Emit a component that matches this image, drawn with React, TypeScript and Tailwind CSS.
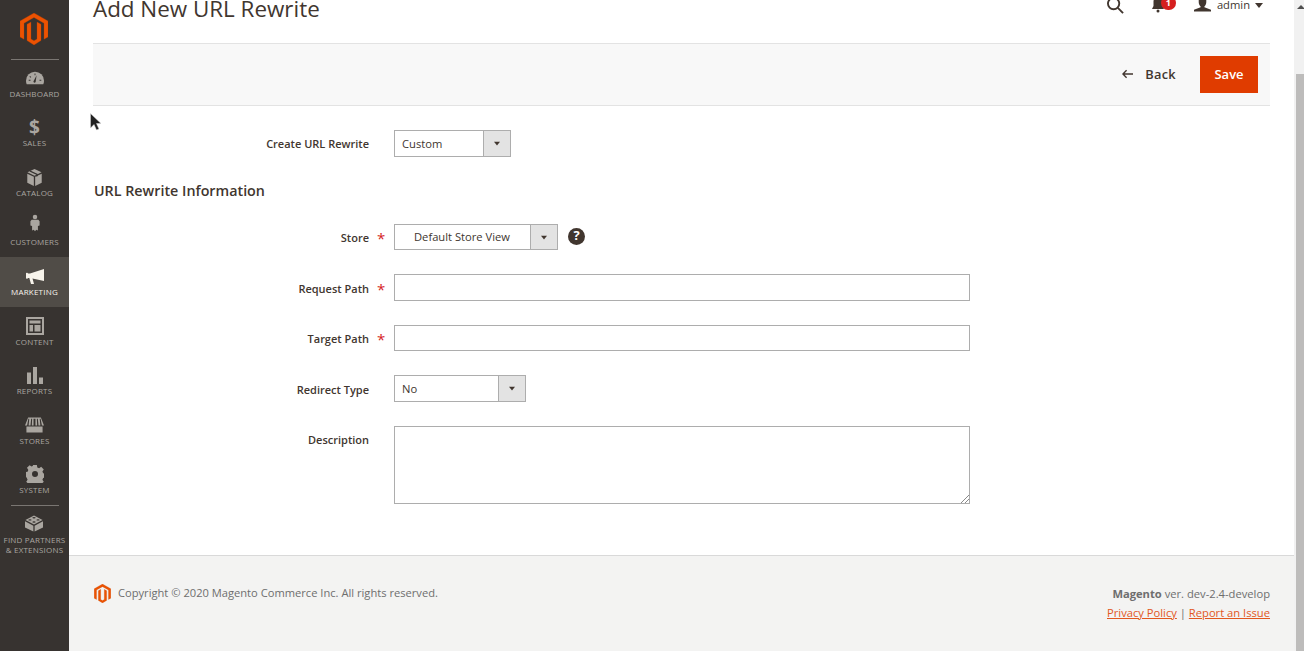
import React from "react";

const font = { fontFamily: '"Open Sans", sans-serif' };

function Logo({ className }: { className: string }) {
  return (
    <svg viewBox="0 0 28 32" className={className} fill="#eb5202" stroke="#b84002" strokeWidth="0.3">
      <path d="M14 0 L28 8 V24 L24 26.3 V10.2 L14 4.5 L4 10.2 V26.3 L0 24 V8 Z" />
      <path d="M7 11.200 L11 9 V26 L14 27.700 L17 26 V9 L21 11.200 V27.600 L14 32 L7 27.600 Z" />
    </svg>
  );
}

const iconFill = "#aaa6a0";

const icons: Record<string, React.ReactNode> = {
  dashboard: (
    <svg viewBox="0 0 20 14" className="h-[14px] w-[18px]">
      <path fill={iconFill} d="M10 0a10 10 0 0 1 10 10c0 1.5-.3 2.8-.8 4H.8C.3 12.800 0 11.500 0 10A10 10 0 0 1 10 0Z" />
      <path fill="#373330" d="M11.800 4 L10.800 10.500 A1.300 1.300 0 1 1 8.800 9.800 Z M3 9h2v1H3Zm12 0h2v1h-2ZM4.500 4.800l1.300 1.200-.7.700-1.300-1.200ZM9.500 2h1v2h-1Z" />
    </svg>
  ),
  sales: <div className="h-[18px] text-[19px] leading-[18px] font-bold text-[#aaa6a0]">$</div>,
  catalog: (
    <svg viewBox="0 0 16 18" className="h-[17px] w-[15px]">
      <path fill={iconFill} d="M8 0 L15.500 3.500 L8 7 L.5 3.500 Z" />
      <path fill={iconFill} d="M.3 5 L7.300 8.300 V18 L.3 14.500 Z M15.700 5 V14.500 L8.700 18 V8.300 Z" />
      <path fill="#373330" d="M4 1.800 L11.500 5.300 V7.500 L10 8.200 V6 L2.600 2.500 Z" />
    </svg>
  ),
  customers: (
    <svg viewBox="0 0 12 20" className="mt-[-6px] h-5 w-[10px]">
      <circle cx="6" cy="2.700" r="2.700" fill={iconFill} />
      <path fill={iconFill} d="M2 6 H10 L11.500 8 V13 L9.500 13.500 V19 L7.500 18 L6 20 L4.500 18 L2.500 19 V13.500 L.5 13 V8 Z" />
    </svg>
  ),
  marketing: (
    <svg viewBox="0 0 18 15" className="h-[15px] w-[18px]">
      <path fill="#f7f3eb" d="M18 0 V12 L6.500 9.500 L8 15 H5 L3.300 9 H2 A1 1 0 0 1 0 8.500 V5 A1 1 0 0 1 2 4.500 H4 Z" />
    </svg>
  ),
  content: (
    <svg viewBox="0 0 18 18" className="h-[18px] w-[18px]">
      <path fill={iconFill} fillRule="evenodd" d="M0 0H18V18H0Z M2 2V16H16V2Z M3.500 3.500H14.500V6.500H3.500Z M3.500 8H7V14.500H3.500Z M8.500 8H14.500V14.500H8.500Z" />
    </svg>
  ),
  reports: (
    <svg viewBox="0 0 16 17" className="h-[17px] w-4">
      <path fill={iconFill} d="M0 5.500H4V17H0Z M6 0H10V17H6Z M12 10.500H16V17H12Z" />
    </svg>
  ),
  stores: (
    <svg viewBox="0 0 20 16" className="h-4 w-[19px]">
      <path fill={iconFill} d="M3.300 0H16.700L20 8.500H17.800L16.400 1.500H15.500L16.200 8.500H14.200L13.500 1.500H12.500L12.800 8.500H11V1.500H9V8.500H7.200L7.500 1.500H6.500L5.800 8.500H3.800L4.500 1.500H3.600L2.200 8.500H0Z M1.500 9.500H18.500V16H1.500Z" />
    </svg>
  ),
  system: (
    <svg viewBox="0 0 24 24" className="h-[18px] w-[18px]">
      <path
        fill={iconFill}
        fillRule="evenodd"
        d="M9.500 0h5l.6 3.200 2.400 1 2.700-1.800 3.500 3.500-1.800 2.700 1 2.400 3.100.6v5l-3.100.6-1 2.400 1.800 2.700-3.500 3.500-2.700-1.800-2.400 1-.6 3.200h-5l-.6-3.200-2.400-1-2.700 1.800-3.500-3.500 1.800-2.700-1-2.400L-1 14.500v-5l3.100-.6 1-2.400L1.300 3.800l3.500-3.500 2.700 1.800 1.400-.9ZM12 8a4 4 0 1 0 0 8 4 4 0 0 0 0-8Z"
      />
    </svg>
  ),
  partners: (
    <svg viewBox="0 0 20 18" className="h-[17px] w-[18px]">
      <path fill={iconFill} d="M10 0 L19.500 5 L10 10 L.5 5 Z" />
      <path fill={iconFill} d="M0 6.500 L9.300 11.400 V18 L0 13.500 Z M20 6.500 V13.500 L10.700 18 V11.400 Z" />
      <g fill="#373330">
        <ellipse cx="10" cy="2.700" rx="1.800" ry="0.800" />
        <ellipse cx="5.500" cy="5" rx="1.800" ry="0.800" />
        <ellipse cx="14.500" cy="5" rx="1.800" ry="0.800" />
        <ellipse cx="10" cy="7.300" rx="1.800" ry="0.800" />
      </g>
    </svg>
  ),
};

const navItems = [
  { key: "dashboard", label: "DASHBOARD", h: "h-[49px]" },
  { key: "sales", label: "SALES", h: "h-[49px]" },
  { key: "catalog", label: "CATALOG", h: "h-[50px]" },
  { key: "customers", label: "CUSTOMERS", h: "h-[49px]" },
  { key: "marketing", label: "MARKETING", h: "h-[50px]", active: true },
  { key: "content", label: "CONTENT", h: "h-[50px]" },
  { key: "reports", label: "REPORTS", h: "h-[49px]" },
  { key: "stores", label: "STORES", h: "h-[50px]" },
  { key: "system", label: "SYSTEM", h: "h-[49px]" },
];

function Sidebar() {
  return (
    <aside className="flex h-full w-[69px] shrink-0 flex-col items-center bg-[#373330]">
      <div className="flex h-[59px] w-full shrink-0 justify-center pr-[1px] pt-[13px]">
        <Logo className="h-[32px] w-[28px]" />
      </div>
      <div className="h-px w-[48px] shrink-0 bg-[#7a7672]" />
      <nav className="flex w-full flex-col">
        {navItems.map((it) => (
          <div
            key={it.key}
            className={`flex ${it.h} w-full flex-col items-center justify-end pb-[10px] ${it.active ? "bg-[#504c47]" : ""}`}
          >
            <div className="flex h-[22px] items-center justify-center">{icons[it.key]}</div>
            <div className={`text-[8px] leading-[10px] tracking-[0.2px] ${it.active ? "text-[#f7f3eb]" : "text-[#aaa6a0]"}`}>
              {it.label}
            </div>
          </div>
        ))}
      </nav>
      <div className="h-px w-[48px] shrink-0 bg-[#7a7672]" />
      <div className="mt-[9px] flex flex-col items-center">
        {icons.partners}
        <div className="mt-[3px] text-center text-[8px] leading-[10px] tracking-[0.2px] text-[#aaa6a0]">
          FIND PARTNERS
          <br />& EXTENSIONS
        </div>
      </div>
    </aside>
  );
}

function Arrow({ className = "" }: { className?: string }) {
  return <div className={`h-0 w-0 border-x-[4px] border-t-[5px] border-x-transparent border-t-[#41362f] ${className}`} />;
}

function Select({ text, w, h = "h-[27px]", center }: { text: string; w: string; h?: string; center?: boolean }) {
  return (
    <div className={`flex ${h} ${w} border border-[#adadad] bg-white`}>
      <div className={`flex flex-1 items-center text-[11.200px] text-[#41362f] ${center ? "justify-center pr-[1px]" : "pl-[7px] pt-[2px]"}`}>
        {text}
      </div>
      <div className="flex w-[27px] items-center justify-center border-l border-[#adadad] bg-[#e3e3e3]">
        <Arrow className="scale-75" />
      </div>
    </div>
  );
}

function Field({
  label,
  req,
  children,
  align,
}: {
  label: string;
  req?: boolean;
  children: React.ReactNode;
  align: string;
}) {
  return (
    <div className="flex">
      <div className={`flex w-[276px] shrink-0 justify-end text-[11px] font-semibold text-[#41362f] ${align}`}>
        <span className="relative">
          {label}
          {req && <span className="absolute left-[calc(100%+8px)] top-[-3px] text-[15px] font-normal text-[#d51f1f]">*</span>}
        </span>
      </div>
      <div className="ml-[25px] flex items-center">{children}</div>
    </div>
  );
}

function Main() {
  return (
    <main className="flex h-full min-w-0 flex-1 flex-col bg-white">
      <div className="flex-1 px-[24px]">
        <div className="flex h-[43px] items-start justify-between">
          <h1 className="text-[22.400px] leading-[17px] text-[#41362f]">Add New URL Rewrite</h1>
          <div className="mr-[7px] flex items-start">
            <svg viewBox="0 0 18 18" className="mt-[-3px] h-[17px] w-[17px]" fill="none" stroke="#41362f" strokeWidth="2">
              <circle cx="7" cy="7" r="6" />
              <path d="M11.500 11.500 L17 17" />
            </svg>
            <div className="relative ml-[28px] w-[18px]">
              <svg viewBox="0 0 12 16" className="mt-[-3px] h-4 w-3" fill="#41362f">
                <path d="M6 0a4.500 4.500 0 0 1 4.500 4.500V9L12 12H0l1.500-3V4.500A4.500 4.500 0 0 1 6 0Z" />
                <circle cx="6" cy="14" r="1.500" />
              </svg>
              <div className="absolute left-[9px] top-[-4px] flex h-[14px] w-[15px] items-center justify-center rounded-full bg-[#d51f1f] text-[9px] font-bold text-white">
                1
              </div>
            </div>
            <svg viewBox="0 0 18 14" className="ml-[24px] mt-[-2px] h-[14px] w-[17px]" fill="#41362f">
              <path d="M5 0h8v4c0 2-1 3.500-2 4.500v1L18 12v2H0v-2l7-2.500v-1C6 7.500 5 6 5 4Z" />
            </svg>
            <span className="ml-[6px] text-[11.200px] leading-[10px] text-[#41362f]">admin</span>
            <Arrow className="ml-[5px] mt-[3px]" />
          </div>
        </div>

        <div className="flex h-[63px] items-center justify-end border-y border-[#e3e3e3] bg-[#f8f8f8] pr-[12px]">
          <svg viewBox="0 0 12 10" className="mb-[2px] mr-[12px] h-[10px] w-[11px]" fill="none" stroke="#41362f" strokeWidth="1.500">
            <path d="M12 5H1M5 1L1 5l4 4" />
          </svg>
          <span className="text-[12.800px] font-semibold tracking-[0.3px] text-[#41362f]">Back</span>
          <button className="ml-[24px] h-[37px] w-[58px] bg-[#e03c00] text-[13px] font-semibold text-white">Save</button>
        </div>

        <div className="mt-[24px]">
          <Field label="Create URL Rewrite" align="items-center pt-[2px]">
            <Select text="Custom" w="w-[117px]" />
          </Field>
        </div>

        <h2 className="ml-px mt-[24px] text-[14.300px] font-semibold leading-[20px] text-[#41362f]">URL Rewrite Information</h2>

        <div className="mt-[23px] flex flex-col">
          <Field label="Store" req align="items-center pt-[2px]">
            <Select text="Default Store View" w="w-[164px]" h="h-[26px]" center />
            <div className="mb-[2px] ml-[10px] flex h-[17px] w-[17px] items-center justify-center rounded-full bg-[#41362f] text-[13px] font-bold text-white">
              ?
            </div>
          </Field>
          <div className="mt-[24px]">
            <Field label="Request Path" req align="items-center pt-[3px]">
              <div className="h-[27px] w-[576px] border border-[#adadad] bg-white" />
            </Field>
          </div>
          <div className="mt-[24px]">
            <Field label="Target Path" req align="items-center pt-[2px]">
              <div className="h-[26px] w-[576px] border border-[#adadad] bg-white" />
            </Field>
          </div>
          <div className="mt-[24px]">
            <Field label="Redirect Type" align="items-center pt-[3px]">
              <Select text="No" w="w-[132px]" />
            </Field>
          </div>
          <div className="mt-[24px]">
            <Field label="Description" align="pt-[6px]">
              <div className="relative h-[78px] w-[576px] border border-[#adadad] bg-white">
                <svg viewBox="0 0 8 8" className="absolute bottom-0 right-0 h-2 w-2" stroke="#8a8a8a" strokeWidth="1">
                  <path d="M8 0L0 8M8 4L4 8" />
                </svg>
              </div>
            </Field>
          </div>
        </div>
      </div>

      <footer className="flex h-[96px] shrink-0 justify-between border-t border-[#d9d9d9] bg-[#f3f3f2] px-[24px] pt-[28px]">
        <div className="flex h-[19px] items-center text-[11.150px] text-[#6e6e6e]">
          <Logo className="ml-[1px] h-[19px] w-[17px]" />
          <span className="ml-[7px]">Copyright © 2020 Magento Commerce Inc. All rights reserved.</span>
        </div>
        <div className="flex flex-col items-end text-[11.200px] leading-[19px] text-[#6e6e6e]">
          <div>
            <span className="font-bold">Magento</span> ver. dev-2.4-develop
          </div>
          <div>
            <span className="text-[#e2571e] underline">Privacy Policy</span> |{" "}
            <span className="text-[#e2571e] underline">Report an Issue</span>
          </div>
        </div>
      </footer>
    </main>
  );
}

function Scrollbar() {
  return (
    <div className="flex h-full w-[10px] shrink-0 flex-col bg-[#f1f1f1]">
      <div className="flex h-[74px] shrink-0 justify-end pt-[5px]">
        <div className="mr-[-1px] h-0 w-0 border-x-[4px] border-b-[4px] border-x-transparent border-b-[#505050]" />
      </div>
      <div className="ml-[2px] flex-1 bg-[#bdbcbb]" />
    </div>
  );
}

export default function App() {
  return (
    <div className="relative flex h-[651px] w-[1304px] overflow-hidden" style={font}>
      <Sidebar />
      <Main />
      <Scrollbar />
      <svg viewBox="0 0 12 20" className="absolute left-[90px] top-[113px] h-[20px] w-[12px]">
        <path d="M0.500 0.500V15L4 11.500L6.500 17L9 16L6.500 10.500H11Z" fill="#222" stroke="#ddd" strokeWidth="0.500" />
      </svg>
    </div>
  );
}
